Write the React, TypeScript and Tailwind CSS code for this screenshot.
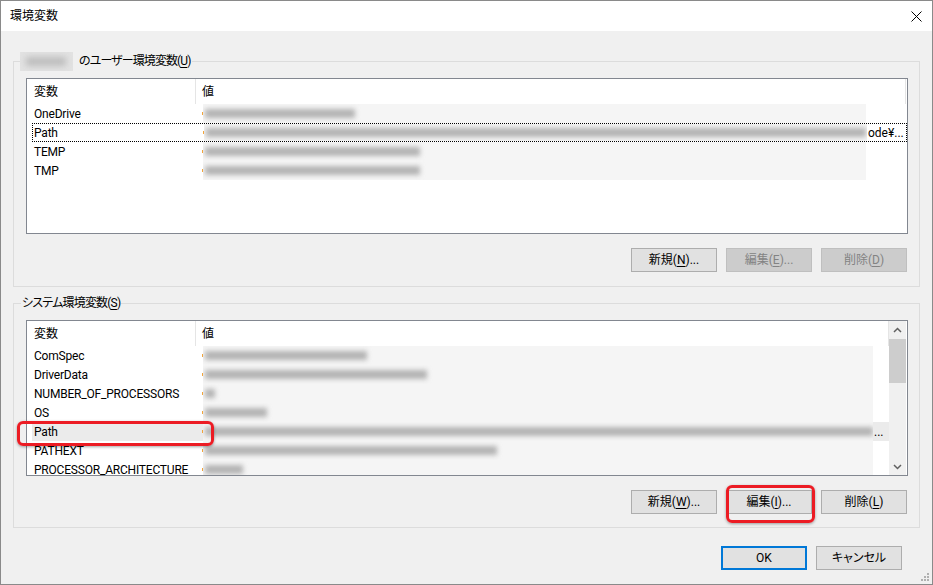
import type { ReactNode } from "react";

type Row = { name: string; w: number; tail?: string; focus?: boolean; selected?: boolean };

const userVars: Row[] = [
  { name: "OneDrive", w: 150 },
  { name: "Path", w: 660, tail: "ode¥...", focus: true },
  { name: "TEMP", w: 215 },
  { name: "TMP", w: 215 },
];

const sysVars: Row[] = [
  { name: "ComSpec", w: 162 },
  { name: "DriverData", w: 222 },
  { name: "NUMBER_OF_PROCESSORS", w: 10 },
  { name: "OS", w: 62 },
  { name: "Path", w: 668, tail: "...", selected: true },
  { name: "PATHEXT", w: 292 },
  { name: "PROCESSOR_ARCHITECTURE", w: 38 },
];

const Btn = ({ children, disabled, primary }: { children: ReactNode; disabled?: boolean; primary?: boolean }) => (
  <div
    className={`w-[86px] h-[24px] flex items-center justify-center text-[12px] ${
      disabled
        ? "bg-[#cccccc] border border-[#bfbfbf] text-[#838383]"
        : primary
        ? "bg-[#e1e1e1] border-2 border-[#0078d7] text-black"
        : "bg-[#e1e1e1] border border-[#adadad] text-black"
    }`}
  >
    {children}
  </div>
);

const Header = ({ col2 }: { col2: string }) => (
  <div className="flex h-[25px] shrink-0">
    <div className="w-[169px] pl-[7px] flex items-center border-r border-[#e5e5e5]">変数</div>
    <div className={`${col2} pl-[6px] flex items-center border-r border-[#e5e5e5]`}>値</div>
  </div>
);

const VarRow = ({ row, haze }: { row: Row; haze: string }) => (
  <div className="flex h-[19px] shrink-0">
    <div
      className={`ml-[5px] flex-1 flex items-center ${
        row.focus ? "border border-dotted border-black" : row.selected ? "bg-[#ebebeb]" : ""
      }`}
    >
      <div className={`w-[170px] whitespace-nowrap tracking-[-0.2px] ${row.focus ? "pl-[1px]" : "pl-[2px]"}`}>
        {row.name}
      </div>
      <div className="w-[1px] h-[3px] bg-[#f2a43a]" />
      <div className={`${haze} h-full bg-[#f5f5f5] overflow-hidden flex items-center`}>
        <div className="h-[9px] bg-[#b3b3b3] blur-[2.5px] ml-[2px]" style={{ width: row.w }} />
      </div>
      {row.tail && <div className="pl-[1px] whitespace-nowrap">{row.tail}</div>}
    </div>
  </div>
);

const Chevron = ({ up }: { up?: boolean }) => (
  <div className="h-[17px] flex items-center justify-center">
    <svg width="9" height="6" viewBox="0 0 9 6">
      <path
        d={up ? "M1 5 L4.5 1.5 L8 5" : "M1 1 L4.5 4.5 L8 1"}
        fill="none"
        stroke="#606060"
        strokeWidth="1.5"
      />
    </svg>
  </div>
);

export default function App() {
  return (
    <div className="w-[933px] h-[585px] border border-[#8a8a8a] bg-[#f0f0f0] flex flex-col overflow-hidden relative text-black text-[12px] [font-family:Roboto,'Noto_Sans_CJK_JP',sans-serif] [font-feature-settings:'palt']">
      {/* Title bar */}
      <div className="h-[30px] bg-white flex items-center justify-between pl-[9px] pr-[10px] shrink-0">
        <span className="text-[12px] leading-none">環境変数</span>
        <svg width="11" height="11" viewBox="0 0 11 11">
          <path d="M0.5 0.5 L10.5 10.5 M10.5 0.5 L0.5 10.5" stroke="#000" strokeWidth="1" />
        </svg>
      </div>

      <div className="flex-1 flex flex-col px-[12px]">
        {/* User variables */}
        <fieldset className="mt-[20px] border border-[#dcdcdc] pl-[12px] pr-[11px] pb-[14px]">
          <legend className="ml-[-6px] pr-[2px] leading-[20px] flex items-center">
            <span className="w-[53px] h-[19px] bg-[#e2e2e2] overflow-hidden flex items-center">
              <span className="w-[40px] h-[9px] ml-[6px] bg-[#bdbdbd] blur-[3px]" />
            </span>
            <span className="ml-[6px] tracking-[-0.9px]">
              のユーザー環境変数(<u className="underline-offset-2">U</u>)
            </span>
          </legend>
          <div className="mt-[7px] h-[156px] bg-white border border-[#828790] flex flex-col overflow-hidden">
            <Header col2="w-[710px]" />
            {userVars.map((r) => (
              <VarRow key={r.name} row={r} haze="w-[663px]" />
            ))}
          </div>
          <div className="mt-[14px] flex justify-end gap-[9px] mr-[1px]">
            <Btn>
              新規(<u className="underline-offset-2">N</u>)...
            </Btn>
            <Btn disabled>
              編集(<u className="underline-offset-2">E</u>)...
            </Btn>
            <Btn disabled>
              削除(<u className="underline-offset-2">D</u>)
            </Btn>
          </div>
        </fieldset>

        {/* System variables */}
        <fieldset className="mt-[6px] border border-[#dcdcdc] pl-[12px] pr-[11px] pb-[13px]">
          <legend className="ml-[-5px] px-[1px] leading-[20px] tracking-[-0.8px]">
            システム環境変数(<u className="underline-offset-2">S</u>)
          </legend>
          <div className="mt-[7px] h-[156px] bg-white border border-[#828790] flex overflow-hidden">
            <div className="flex-1 flex flex-col overflow-hidden">
              <Header col2="w-[693px]" />
              {sysVars.map((r) => (
                <VarRow key={r.name} row={r} haze="w-[670px]" />
              ))}
            </div>
            <div className="w-[17px] bg-[#f0f0f0] flex flex-col mr-[1px]">
              <Chevron up />
              <div className="mt-[1px] h-[44px] bg-[#cdcdcd]" />
              <div className="flex-1" />
              <Chevron />
            </div>
          </div>
          <div className="mt-[14px] flex justify-end gap-[9px] mr-[1px]">
            <Btn>
              新規(<u className="underline-offset-2">W</u>)...
            </Btn>
            <Btn>
              編集(<u className="underline-offset-2">I</u>)...
            </Btn>
            <Btn>
              削除(<u className="underline-offset-2">L</u>)
            </Btn>
          </div>
        </fieldset>

        {/* Dialog buttons */}
        <div className="mt-[18px] flex justify-end gap-[9px] pr-[18px]">
          <Btn primary>OK</Btn>
          <Btn>キャンセル</Btn>
        </div>
      </div>

      {/* Resize grip */}
      <svg className="absolute right-[2px] bottom-[2px]" width="10" height="10" viewBox="0 0 10 10">
        <rect x="7" y="1" width="2" height="2" fill="#b0b0b0" />
        <rect x="4" y="4" width="2" height="2" fill="#b0b0b0" />
        <rect x="7" y="4" width="2" height="2" fill="#b0b0b0" />
        <rect x="1" y="7" width="2" height="2" fill="#b0b0b0" />
        <rect x="4" y="7" width="2" height="2" fill="#b0b0b0" />
        <rect x="7" y="7" width="2" height="2" fill="#b0b0b0" />
      </svg>

      {/* Red annotation boxes */}
      <div className="absolute left-[16px] top-[420px] w-[197px] h-[25px] border-[3px] border-[#ec1c24] rounded-[6px] shadow-[0_1px_3px_rgba(0,0,0,0.35)]" />
      <div className="absolute left-[725px] top-[484px] w-[89px] h-[38px] border-[3px] border-[#ec1c24] rounded-[6px] shadow-[0_1px_3px_rgba(0,0,0,0.35)]" />
    </div>
  );
}
